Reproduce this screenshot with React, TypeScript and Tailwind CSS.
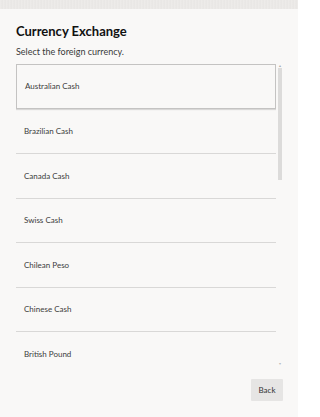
import React from 'react';

const items = [
  'Australian Cash',
  'Brazilian Cash',
  'Canada Cash',
  'Swiss Cash',
  'Chilean Peso',
  'Chinese Cash',
  'British Pound',
];

export default function App() {
  return (
    <div
      className="w-[298px] h-[417px] bg-[#f9f8f7] flex flex-col overflow-hidden"
      style={{ fontFamily: 'Lato, "Open Sans", sans-serif' }}
    >
      {/* textured strip on top */}
      <div className="h-[9px] w-full bg-[repeating-linear-gradient(90deg,#e9e7e5_0px,#f1efed_1px,#e4e2e0_2px,#eeecea_3px)]" />

      <div className="flex-1 flex flex-col px-4 pt-[14px] min-h-0">
        <h1 className="text-[13px] leading-[16px] font-bold text-[#111]">Currency Exchange</h1>
        <p className="mt-[7px] text-[9px] leading-[12px] text-[#3a3a3a]">Select the foreign currency.</p>

        <div className="mt-[6px] flex h-[302px] min-h-0">
          <div className="flex-1 h-full overflow-hidden">
            {items.map((name, i) => (
              <div
                key={name}
                className={
                  i === 0
                    ? 'h-[44.5px] flex items-center px-2 border border-[#c4c3c2] shadow-[0_1px_1px_rgba(0,0,0,0.12)] text-[8px] text-[#3c3c3c]'
                    : 'h-[44.5px] flex items-center px-2 border-t border-[#d9d8d7] text-[8px] text-[#3c3c3c]'
                }
              >
                {name}
              </div>
            ))}
          </div>
          {/* scrollbar */}
          <div className="w-[5px] ml-[1px] h-full flex flex-col items-center">
            <div className="h-[4px] text-[4px] leading-[4px] text-[#aaa]">▴</div>
            <div className="w-[4px] h-[112px] bg-[#dcdbda]" />
            <div className="flex-1" />
            <div className="h-[4px] text-[4px] leading-[4px] text-[#bbb]">▾</div>
          </div>
        </div>

        <div className="flex justify-end mt-[13px]">
          <button className="w-[32px] h-[22px] mr-[-1px] bg-[#e6e5e4] text-[8px] text-[#333] rounded-[1px]">Back</button>
        </div>
      </div>
    </div>
  );
}
